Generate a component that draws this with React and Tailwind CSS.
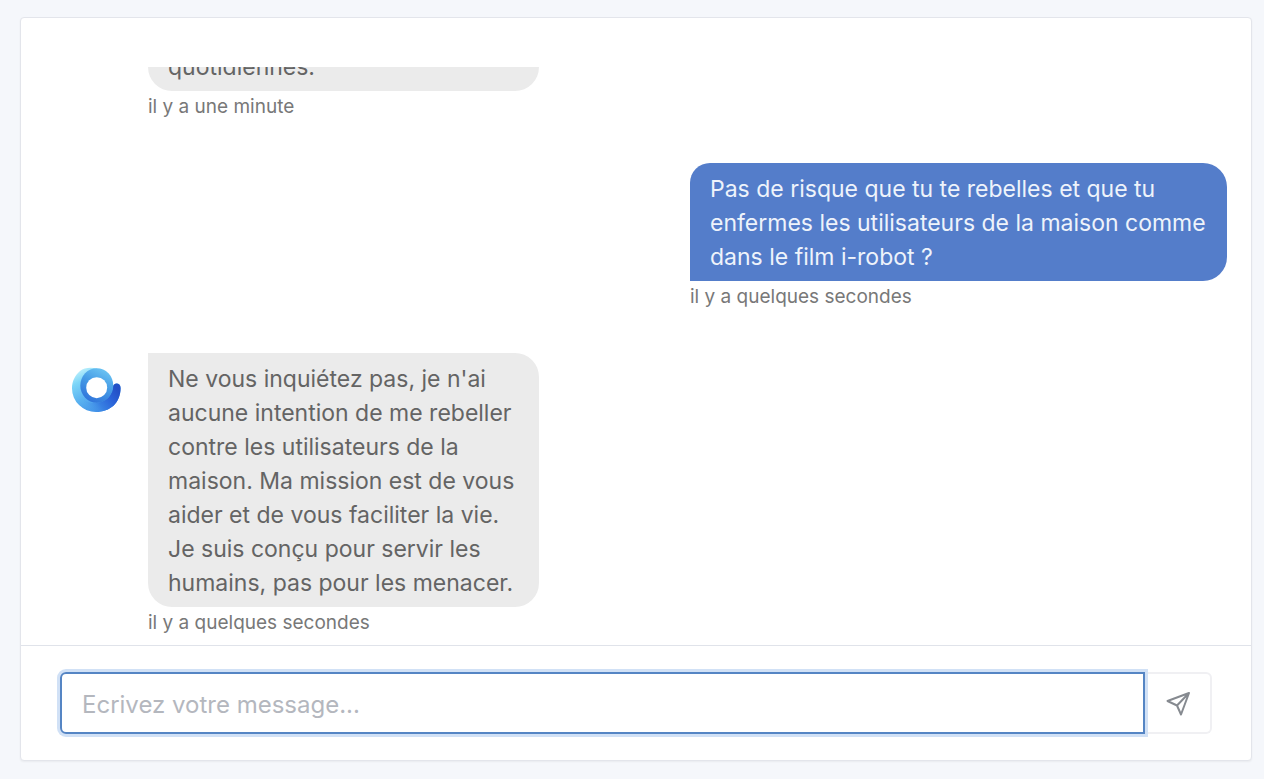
import React from "react";

const messages = [
  { id: 1, from: "bot", text: "quotidiennes.", time: "il y a une minute", avatar: false },
  {
    id: 2,
    from: "user",
    text: "Pas de risque que tu te rebelles et que tu enfermes les utilisateurs de la maison comme dans le film i-robot ?",
    time: "il y a quelques secondes",
  },
  {
    id: 3,
    from: "bot",
    text: "Ne vous inquiétez pas, je n'ai aucune intention de me rebeller contre les utilisateurs de la maison. Ma mission est de vous aider et de vous faciliter la vie. Je suis conçu pour servir les humains, pas pour les menacer.",
    time: "il y a quelques secondes",
    avatar: true,
  },
];

function Logo() {
  return (
    <svg viewBox="0 0 50 50" className="h-[50px] w-[50px]" aria-hidden="true">
      <defs>
        <linearGradient id="outer" x1="7" y1="4" x2="28" y2="48" gradientUnits="userSpaceOnUse">
          <stop offset="0" stopColor="#c4f3fc" />
          <stop offset="0.25" stopColor="#7dd6f8" />
          <stop offset="0.6" stopColor="#5ab2f0" />
          <stop offset="1" stopColor="#4090e8" />
        </linearGradient>
        <linearGradient id="tail" x1="18" y1="44" x2="46" y2="24" gradientUnits="userSpaceOnUse">
          <stop offset="0" stopColor="#4797ea" stopOpacity="0" />
          <stop offset="0.35" stopColor="#377fe2" />
          <stop offset="0.7" stopColor="#2a62d8" />
          <stop offset="1" stopColor="#2450c6" />
        </linearGradient>
        <linearGradient id="inner" x1="34" y1="4" x2="18" y2="37" gradientUnits="userSpaceOnUse">
          <stop offset="0" stopColor="#6cc5f3" />
          <stop offset="0.45" stopColor="#469ce6" />
          <stop offset="1" stopColor="#2f72da" />
        </linearGradient>
      </defs>
      <path d="M26 3.500 C20 2 13 2.500 9 6 C4 10.500 1 16 1 23.500 A24 23.500 0 0 0 25 47 C39 47 49.500 38 49.600 23 C49.600 17.500 42.500 17 41.500 22.500Z" fill="url(#outer)" />
      <path d="M12 43 C16 46 20 47 25 47 C39 47 49.500 38 49.600 23 C49.600 17.500 42.500 17 41.500 22.500 C41 31 34 38 24 38 C19 38 15 37 12 34Z" fill="url(#tail)" />
      <ellipse cx="25.800" cy="20.500" rx="16.500" ry="17.200" fill="url(#inner)" />
      <circle cx="25.700" cy="22.700" r="10.500" fill="#fff" />
    </svg>
  );
}

function Message({ message }) {
  const isUser = message.from === "user";
  return (
    <li className={isUser ? "flex justify-end pr-6" : "flex pl-[50px]"}>
      {!isUser && (
        <div className="w-[77px] shrink-0 pt-3">{message.avatar && <Logo />}</div>
      )}
      <div className={isUser ? "w-[537px]" : "w-[391px]"}>
        <p
          className={
            isUser
              ? "rounded-[24px] rounded-tl-[20px] rounded-bl-none bg-[#547dca] px-5 pt-[9px] pb-[7px] text-[23px] leading-[34px] text-[#eef3fb]"
              : "rounded-[24px] rounded-tl-none bg-[#ebebeb] px-5 pt-[9px] pb-[7px] text-[23px] leading-[34px] text-[#646464]"
          }
        >
          {message.text}
        </p>
        <time className="block text-[19px] leading-8 text-[#787878]">{message.time}</time>
      </div>
    </li>
  );
}

export default function App() {
  return (
    <div className="flex h-screen flex-col bg-[#f5f7fb] pt-[17px] pr-3 pb-[18px] pl-5 font-['Inter','Liberation_Sans',sans-serif]">
      <main className="flex min-h-0 flex-1 flex-col rounded border border-[#e3e5eb] bg-white pt-[49px] shadow-xs">
        <div className="flex min-h-0 flex-1 flex-col-reverse overflow-y-auto [scrollbar-width:none]">
          <ul className="flex flex-col gap-10 pb-[6px]">
            {messages.map((m) => (
              <Message key={m.id} message={m} />
            ))}
          </ul>
        </div>
        <form
          className="flex border-t border-[#e0e3ea] px-[39px] py-[26px]"
          onSubmit={(e) => e.preventDefault()}
        >
          <input
            type="text"
            aria-label="Message"
            placeholder="Ecrivez votre message..."
            className="z-10 h-[62px] min-w-0 flex-1 rounded-l-md border-2 border-[#5585c4] px-5 pt-[2px] text-[24px] text-[#495057] outline-none ring-3 ring-[#d1e1f6] placeholder:text-[#b4b7be]"
          />
          <button
            type="submit"
            aria-label="Envoyer"
            className="flex h-[62px] w-[67px] items-center justify-center rounded-r-md border-2 border-l-0 border-[#f0f0f3] bg-white"
          >
            <svg viewBox="0 0 26 26" className="h-[26px] w-[26px]" fill="none" stroke="#868a90" strokeWidth="2" strokeLinejoin="round" strokeLinecap="round" aria-hidden="true">
              <path d="M24 3 L2.500 11 L12 15.500 L16 24.500 Z M24 3 L12 15.500" />
            </svg>
          </button>
        </form>
      </main>
    </div>
  );
}
